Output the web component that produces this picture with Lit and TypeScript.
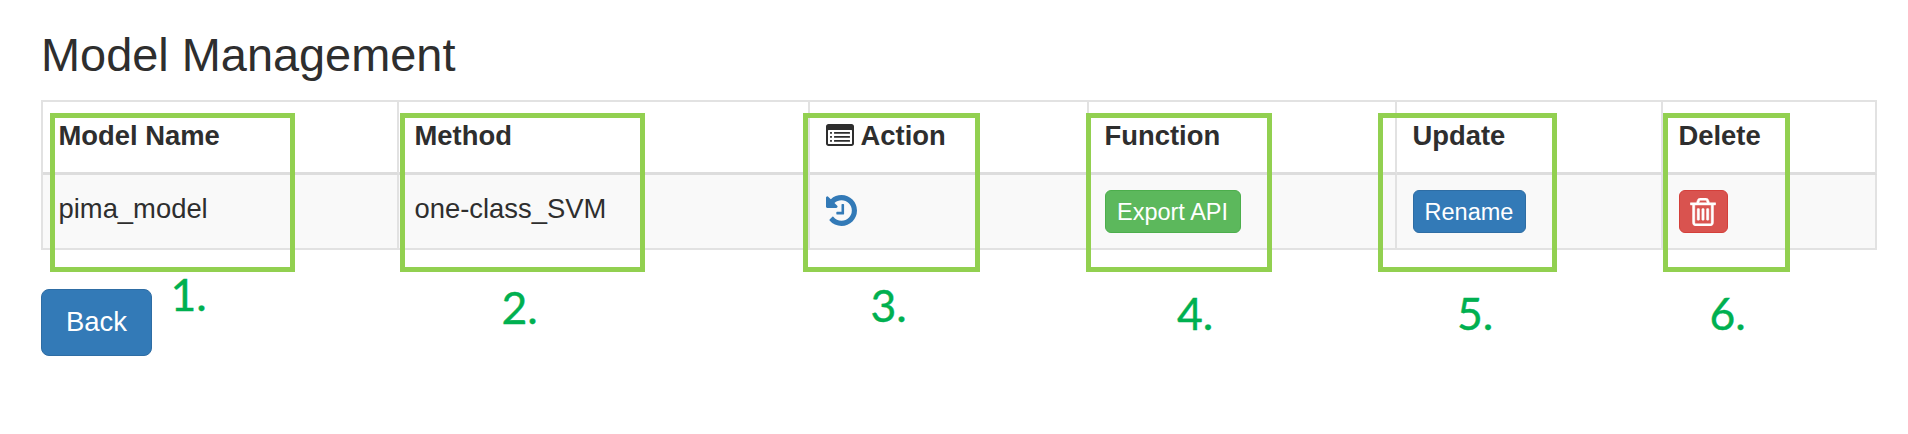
import { LitElement, html, css, svg } from "lit";
import { customElement } from "lit/decorators.js";
import { styleMap } from "lit/directives/style-map.js";

const listBars = [640, 896, 1152];

const listIcon = html`<svg class="list-icon" viewBox="0 192 1792 1408" aria-hidden="true">
  <path fill-rule="evenodd" d="M1792 352v1088q0 66-47 113t-113 47h-1472q-66 0-113-47t-47-113v-1088q0-66 47-113t113-47h1472q66 0 113 47t47 113zM1664 1440v-832q0-13-9.5-22.5t-22.5-9.5h-1472q-13 0-22.5 9.5t-9.5 22.5v832q0 13 9.5 22.5t22.5 9.5h1472q13 0 22.5-9.5t9.5-22.5z"/>
  ${listBars.map((y) => svg`<rect x="256" y=${y + 60} width="128" height="110" rx="32"/><rect x="512" y=${y + 60} width="1024" height="110" rx="32"/>`)}
</svg>`;

const historyIcon = html`<svg class="history-icon" viewBox="128 128 1536 1536" aria-hidden="true">
  <path d="M1664 896q0 156-61 298t-164 245-245 164-298 61q-172 0-327-72.5t-264-204.5q-7-10-6.5-22.5t8.5-20.5l137-138q10-9 25-9 16 2 23 12 73 95 179 147t225 52q104 0 198.5-40.5t163.5-109.5 109.5-163.5 40.5-198.5-40.5-198.5-109.5-163.5-163.5-109.5-198.5-40.5q-98 0-188 35.5t-160 101.5l137 138q31 30 14 69-17 40-59 40h-448q-26 0-45-19t-19-45v-448q0-42 40-59 39-17 69 14l130 129q107-101 244.5-156.5t284.5-55.5q156 0 298 61t245 164 164 245 61 298zm-640-288v448q0 14-9 23t-23 9h-320q-14 0-23-9t-9-23v-64q0-14 9-23t23-9h224v-352q0-14 9-23t23-9h64q14 0 23 9t9 23z"/>
</svg>`;

const trashIcon = html`<svg class="trash-icon" viewBox="192 128 1408 1536" aria-hidden="true">
  <path d="M704 736v576q0 14-9 23t-23 9h-64q-14 0-23-9t-9-23v-576q0-14 9-23t23-9h64q14 0 23 9t9 23zm256 0v576q0 14-9 23t-23 9h-64q-14 0-23-9t-9-23v-576q0-14 9-23t23-9h64q14 0 23 9t9 23zm256 0v576q0 14-9 23t-23 9h-64q-14 0-23-9t-9-23v-576q0-14 9-23t23-9h64q14 0 23 9t9 23zm128 724v-948h-896v948q0 22 7 40.5t14.5 27 10.5 8.5h832q3 0 10.5-8.5t14.5-27 7-40.5zm-672-1076h448l-48-117q-7-9-17-11h-317q-10 2-17 11zm928 32v64q0 14-9 23t-23 9h-96v948q0 83-47 143.5t-113 60.5h-832q-66 0-113-58.5t-47-141.5v-952h-96q-14 0-23-9t-9-23v-64q0-14 9-23t23-9h309l70-167q15-37 54-63t79-26h320q40 0 79 26t54 63l70 167h309q14 0 23 9t9 23z"/>
</svg>`;

// Callout frames and their numbers, laid over the table.
const callouts = [
  { label: "1.", x: 50, w: 245, lx: 170.5, base: 311 },
  { label: "2.", x: 400, w: 245, lx: 501.5, base: 324 },
  { label: "3.", x: 803, w: 177, lx: 870.5, base: 322 },
  { label: "4.", x: 1086, w: 186, lx: 1177, base: 330 },
  { label: "5.", x: 1378, w: 179, lx: 1457, base: 330 },
  { label: "6.", x: 1663, w: 127, lx: 1709.5, base: 330 },
];

@customElement("app-root")
export class AppRoot extends LitElement {
  static styles = css`
    :host {
      display: block;
      position: relative;
      box-sizing: border-box;
      height: 434px;
      padding: 26px 31px 0 41px;
      overflow: hidden;
      background: #fff;
      color: #2e2e2e;
      font-family: "Liberation Sans", Arial, sans-serif;
      font-size: 27.4px;
    }
    .title {
      margin: 0;
      height: 74px;
      line-height: 58px;
      font-size: 46.9px;
      font-weight: 400;
      white-space: nowrap;
    }
    .table {
      display: grid;
      grid-template-columns: 356px 411px 279px 308px 266px 214px;
      box-sizing: border-box;
      width: 1836px;
      height: 150px;
      grid-template-rows: 73px 73px;
      border: solid #e2e2e2;
      border-width: 2px 0 2px 2px;
    }
    .th, .td {
      box-sizing: border-box;
      border-right: 2px solid #e2e2e2;
      padding-left: 15.5px;
      white-space: nowrap;
    }
    .th {
      display: flex;
      align-items: center;
      gap: 7px;
      padding-bottom: 3px;
      border-bottom: 3px solid #ddd;
      font-weight: 700;
    }
    .td {
      padding-top: 15px;
      background: #f9f9f9;
      line-height: 37px;
    }
    .btn {
      display: flex;
      align-items: center;
      justify-content: center;
      box-sizing: border-box;
      margin: 0;
      padding: 0;
      border: 1.5px solid #2e6da4;
      border-radius: 6px;
      background: #337ab7;
      color: #fff;
      font-family: inherit;
      font-size: 23.5px;
      line-height: 1;
    }
    .small { height: 43px; padding-top: 2px; }
    .export { width: 136px; background: #5cb85c; border-color: #4cae4c; }
    .rename { width: 113px; }
    .delete { width: 49px; padding-top: 0; background: #d9534f; border-color: #d43f3a; }
    .back { width: 111px; height: 67px; margin-top: 39px; padding-bottom: 2px; border-radius: 8px; font-size: 27.5px; }
    svg { display: block; fill: currentColor; }
    .list-icon { width: 28px; height: 22px; margin-top: -2px; }
    .history-icon { width: 31px; height: 31px; margin-top: 5px; color: #337ab7; }
    .trash-icon { width: 26px; height: 28px; stroke: currentColor; stroke-width: 24; }
    .frame {
      position: absolute;
      top: 113px;
      height: 159px;
      box-sizing: border-box;
      border: 5px solid #92d050;
    }
    .num {
      position: absolute;
      color: #00b050;
      font-family: Lato, sans-serif;
      font-size: 44.5px;
      line-height: 50px;
      white-space: nowrap;
      -webkit-text-stroke: 0.4px #00b050;
    }
  `;

  render() {
    return html`
      <h3 class="title">Model Management</h3>
      <div class="table">
        <div class="th">Model Name</div>
        <div class="th">Method</div>
        <div class="th">${listIcon}<span>Action</span></div>
        <div class="th">Function</div>
        <div class="th">Update</div>
        <div class="th">Delete</div>
        <div class="td">pima_model</div>
        <div class="td">one-class_SVM</div>
        <div class="td">${historyIcon}</div>
        <div class="td"><button class="btn small export">Export API</button></div>
        <div class="td"><button class="btn small rename">Rename</button></div>
        <div class="td"><button class="btn small delete" aria-label="Delete">${trashIcon}</button></div>
      </div>
      <button class="btn back">Back</button>
      ${callouts.map(
        (c) => html`
          <div class="frame" style=${styleMap({ left: `${c.x}px`, width: `${c.w}px` })}></div>
          <span class="num" style=${styleMap({ left: `${c.lx}px`, top: `${c.base - 42}px` })}>${c.label}</span>
        `,
      )}
    `;
  }
}
